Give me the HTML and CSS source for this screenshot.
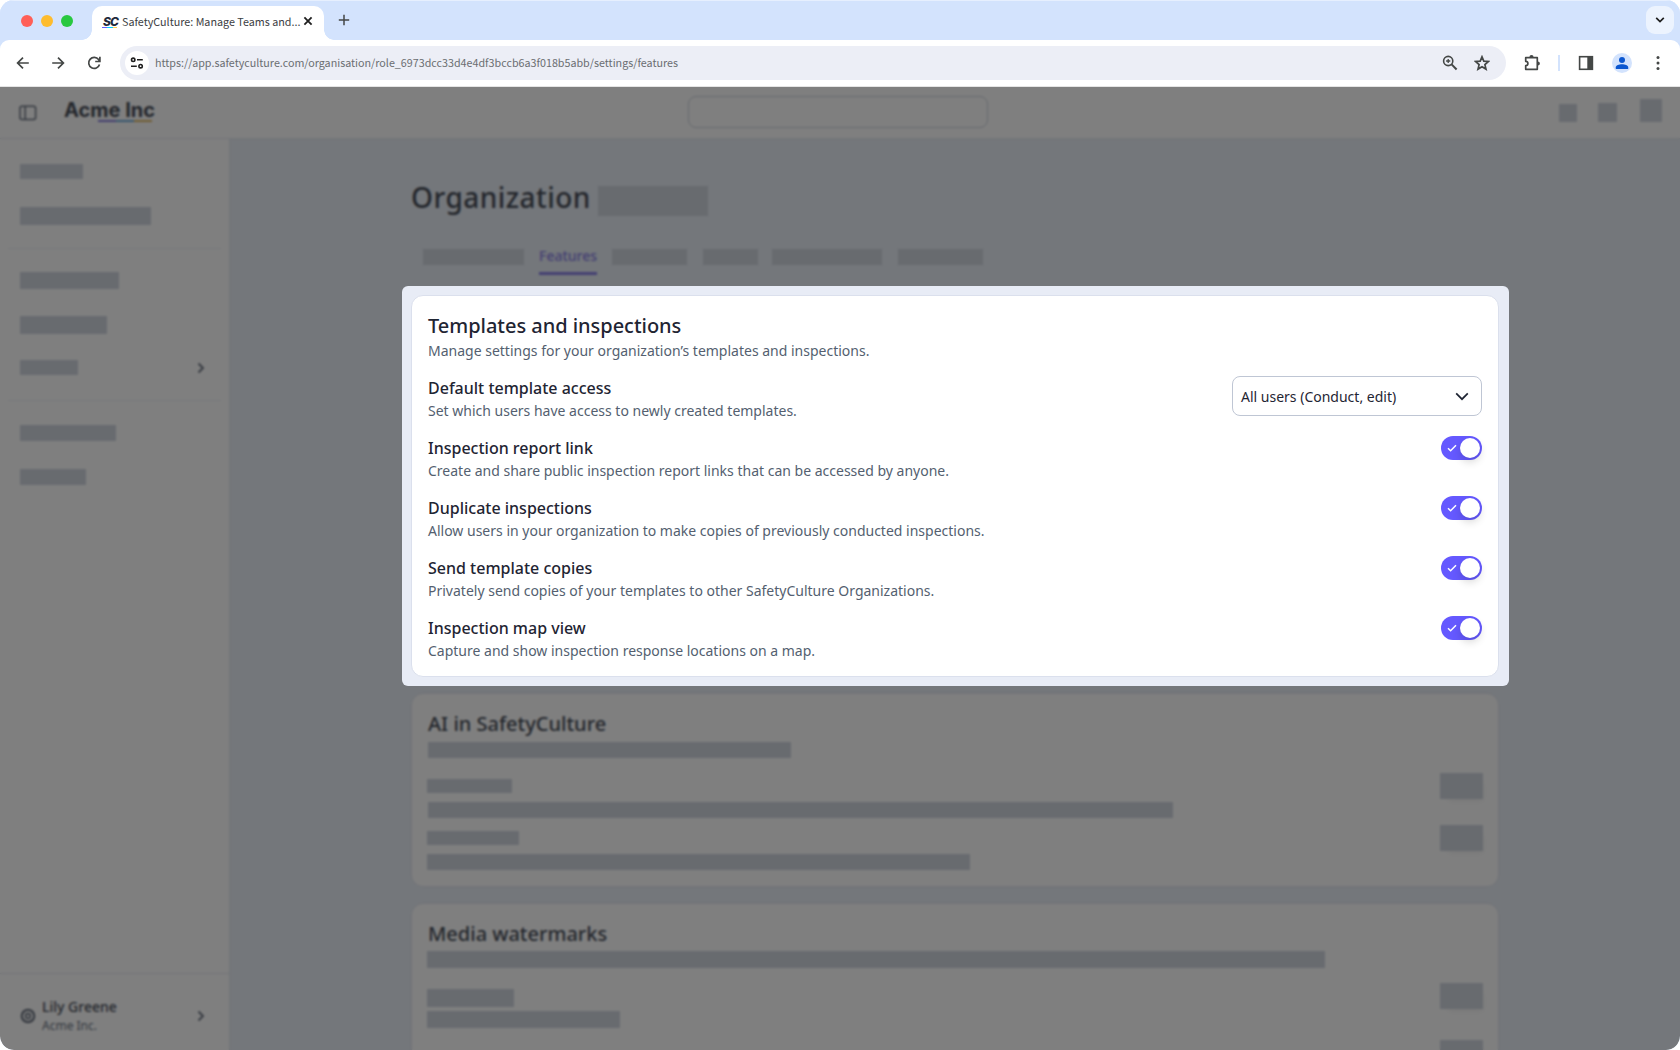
FILE: index.html
```html
<!DOCTYPE html>
<html lang="en">
<head>
  <meta charset="UTF-8">
  <meta name="viewport" content="width=device-width, initial-scale=1.0">
  <title>SafetyCulture: Manage Teams and Users</title>
  <link rel="stylesheet" href="styles.css">
</head>
<body>
  <div class="window">

    <!-- Browser chrome -->
    <div class="tabstrip">
      <div class="lights">
        <span class="light red"></span>
        <span class="light yellow"></span>
        <span class="light green"></span>
      </div>
      <div class="tab">
        <span class="favicon">SC</span>
        <span class="tab-title">SafetyCulture: Manage Teams and...</span>
        <svg class="tab-close" width="10" height="10" viewBox="0 0 10 10"><path d="M1.4 1.4l7.2 7.2M8.6 1.4L1.4 8.6" stroke="#1f1f1f" stroke-width="1.8" fill="none"/></svg>
      </div>
      <svg class="new-tab" width="12" height="12" viewBox="0 0 12 12"><path d="M6 .8v10.4M.8 6h10.4" stroke="#444746" stroke-width="1.5" fill="none"/></svg>
      <div class="tab-search">
        <svg width="10" height="6" viewBox="0 0 10 6"><path d="M1.2 .8L5 4.5 8.8 .8" stroke="#1f1f1f" stroke-width="1.7" fill="none"/></svg>
      </div>
    </div>

    <div class="toolbar">
      <svg class="nav" width="16" height="16" viewBox="0 0 16 16"><path d="M13.8 8H2.8M8 2.6L2.6 8 8 13.4" /></svg>
      <svg class="nav forward" width="16" height="16" viewBox="0 0 16 16"><path d="M2.200 8h11M8 2.6L13.4 8 8 13.400" /></svg>
      <svg class="nav reload" width="16" height="16" viewBox="0 0 16 16"><path d="M13.5 9.4A5.500 5.500 0 1 1 12.600 4.600L13.800 6M13.900 1.800v4.700H9.200" /></svg>
      <div class="omnibox">
        <span class="site-info">
          <svg width="14" height="12" viewBox="0 0 14 12" fill="none" stroke="#1f1f1f" stroke-width="1.6"><circle cx="3.2" cy="2.8" r="1.7"/><path d="M7 2.8h5.8M1 9.2h5.8"/><circle cx="10.6" cy="9.2" r="1.7"/></svg>
        </span>
        <span class="url">https://app.safetyculture.com/organisation/role_6973dcc33d4e4df3bccb6a3f018b5abb/settings/features</span>
        <svg class="zoom-icon" width="16" height="16" viewBox="0 0 16 16" fill="none" stroke="#444746"><circle cx="6.2" cy="6" r="4.6" stroke-width="1.6"/><path d="M9.6 9.4l5 5.1" stroke-width="2"/><path d="M6.2 3.9v4.2M4.1 6h4.2" stroke-width="1.3"/></svg>
        <svg class="star-icon" width="16" height="16" viewBox="0 0 16 16"><path d="M8 1.8l1.8 4.300 4.6.4-3.500 3.100 1.100 4.500L8 11.700l-4 2.400 1.100-4.500L1.600 6.500l4.600-.4z" fill="none" stroke="#444746" stroke-width="1.7"/></svg>
      </div>
      <svg class="puzzle" width="18" height="18" viewBox="0 0 18 18"><path d="M2.7 3.7h11.6v11.6H2.7v-3.6a2.2 2.2 0 0 0 0-4.4z" fill="none" stroke="#444746" stroke-width="1.7" stroke-linejoin="round"/><path d="M6.4 3.2a2.1 2.1 0 0 1 4.2 0zM14.8 7.4a2.1 2.1 0 0 1 0 4.2z" fill="#444746"/></svg>
      <span class="toolbar-divider"></span>
      <svg class="side-panel" width="16" height="16" viewBox="0 0 16 16"><rect x="1.6" y="1.7" width="12.8" height="12.6" fill="none" stroke="#444746" stroke-width="1.6"/><path d="M9.3 1h5.7v14H9.3z" fill="#444746"/></svg>
      <span class="avatar">
        <svg width="14" height="14" viewBox="0 0 14 14" fill="#0b57d0"><circle cx="7" cy="4" r="3"/><path d="M.8 13v-1.8C.8 9.3 4 8.2 7 8.2s6.2 1.1 6.2 3V13z"/></svg>
      </span>
      <svg class="more" width="4" height="14" viewBox="0 0 4 14" fill="#444746"><circle cx="2" cy="1.6" r="1.5"/><circle cx="2" cy="7" r="1.5"/><circle cx="2" cy="12.4" r="1.5"/></svg>
    </div>

    <!-- Web app -->
    <div class="app">
      <div class="app-header">
        <svg class="menu-icon" width="18" height="16" viewBox="0 0 18 16" fill="none" stroke="#6a7280" stroke-width="1.5"><rect x="1" y="1.2" width="15.6" height="13.2" rx="2"/><path d="M6.2 1.2v13.2"/></svg>
        <div class="brand">
          <span class="brand-name">Acme Inc</span>
          <span class="brand-line"></span>
        </div>
        <div class="search"></div>
        <div class="header-actions">
          <span class="block action-one"></span>
          <span class="block action-two"></span>
          <span class="block action-three"></span>
        </div>
      </div>

      <div class="app-body">
        <div class="sidebar">
          <span class="block nav-one"></span>
          <span class="block nav-two"></span>
          <hr class="nav-rule">
          <span class="block nav-three"></span>
          <span class="block nav-four"></span>
          <div class="nav-row">
            <span class="block nav-five"></span>
            <svg width="8" height="12" viewBox="0 0 8 12"><path d="M1.5 1.500L6 6l-4.5 4.5" fill="none" stroke="#6a7280" stroke-width="1.8"/></svg>
          </div>
          <hr class="nav-rule second">
          <span class="block nav-six"></span>
          <span class="block nav-seven"></span>
          <div class="profile">
            <svg width="16" height="16" viewBox="0 0 16 16" fill="none" stroke="#6a7280"><circle cx="8" cy="8" r="6.2" stroke-width="2.2"/><circle cx="8" cy="8" r="2.4" stroke-width="1.6"/></svg>
            <div class="profile-text">
              <span class="profile-name">Lily Greene</span>
              <span class="profile-org">Acme Inc.</span>
            </div>
            <svg width="8" height="12" viewBox="0 0 8 12"><path d="M1.5 1.5L6 6l-4.5 4.5" fill="none" stroke="#6a7280" stroke-width="1.8"/></svg>
          </div>
        </div>

        <div class="main">
          <div class="page-title">
            <h1>Organization</h1>
            <span class="block title-block"></span>
          </div>
          <div class="tabs">
            <span class="block tab-one"></span>
            <span class="tab-active">Features</span>
            <span class="block tab-two"></span>
            <span class="block tab-three"></span>
            <span class="block tab-four"></span>
            <span class="block tab-five"></span>
          </div>

          <div class="card ai-card">
            <h2>AI in SafetyCulture</h2>
            <div class="card-cols">
              <div class="lines">
                <span class="block ai-one"></span>
                <span class="block ai-two"></span>
                <span class="block ai-three"></span>
                <span class="block ai-four"></span>
                <span class="block ai-five"></span>
              </div>
              <div class="switch-blocks ai-switches">
                <span class="block"></span>
                <span class="block"></span>
              </div>
            </div>
          </div>

          <div class="card media-card">
            <h2>Media watermarks</h2>
            <div class="card-cols">
              <div class="lines">
                <span class="block media-one"></span>
                <span class="block media-two"></span>
                <span class="block media-three"></span>
              </div>
              <div class="switch-blocks media-switches">
                <span class="block"></span>
                <span class="block"></span>
              </div>
            </div>
          </div>
        </div>
      </div>

      <div class="overlay"></div>

      <!-- Highlighted settings -->
      <div class="spotlight">
        <div class="settings">
          <h2>Templates and inspections</h2>
          <p>Manage settings for your organization’s templates and inspections.</p>

          <div class="setting">
            <div>
              <h3>Default template access</h3>
              <p>Set which users have access to newly created templates.</p>
            </div>
            <div class="select">
              <span>All users (Conduct, edit)</span>
              <svg width="14" height="9" viewBox="0 0 14 9"><path d="M1.2 1.3L7 7.2l5.8-5.9" fill="none" stroke="#1f2533" stroke-width="1.7"/></svg>
            </div>
          </div>

          <div class="setting">
            <div>
              <h3>Inspection report link</h3>
              <p>Create and share public inspection report links that can be accessed by anyone.</p>
            </div>
            <div class="toggle"><svg width="10" height="8" viewBox="0 0 10 8"><path d="M1 4.2l2.6 2.5L9 1.2"/></svg><span class="knob"></span></div>
          </div>

          <div class="setting">
            <div>
              <h3>Duplicate inspections</h3>
              <p>Allow users in your organization to make copies of previously conducted inspections.</p>
            </div>
            <div class="toggle"><svg width="10" height="8" viewBox="0 0 10 8"><path d="M1 4.2l2.6 2.5L9 1.2"/></svg><span class="knob"></span></div>
          </div>

          <div class="setting">
            <div>
              <h3>Send template copies</h3>
              <p>Privately send copies of your templates to other SafetyCulture Organizations.</p>
            </div>
            <div class="toggle"><svg width="10" height="8" viewBox="0 0 10 8"><path d="M1 4.2l2.6 2.5L9 1.2"/></svg><span class="knob"></span></div>
          </div>

          <div class="setting">
            <div>
              <h3>Inspection map view</h3>
              <p>Capture and show inspection response locations on a map.</p>
            </div>
            <div class="toggle"><svg width="10" height="8" viewBox="0 0 10 8"><path d="M1 4.2l2.6 2.5L9 1.2"/></svg><span class="knob"></span></div>
          </div>
        </div>
      </div>
    </div>
  </div>
</body>
</html>
```

FILE: styles.css
```css
* {
  box-sizing: border-box;
}
body {
  margin: 0;
  background: #fff;
  font-family: "Noto Sans", sans-serif;
  color: #1f2533;
  overflow: hidden;
}
h1, h2, h3, p, hr {
  margin: 0;
}
svg {
  display: block;
  flex: none;
}
.window {
  width: 1680px;
  height: 1050px;
  border-radius: 14px;
  overflow: hidden;
  display: flex;
  flex-direction: column;
  background: #d3e3fd;
}

/* tab strip */
.tabstrip {
  height: 40px;
  flex: none;
  display: flex;
  background: #d3e3fd;
  border-top: 1px solid #e6effe;
}
.lights {
  display: flex;
  gap: 8px;
  width: 92px;
  padding: 14px 0 0 21px;
}
.light {
  width: 12px;
  height: 12px;
  border-radius: 50%;
}
.red { background: #ff5f57; }
.yellow { background: #febc2e; }
.green { background: #28c840; }
.tab {
  position: relative;
  display: flex;
  align-items: center;
  width: 232px;
  height: 34px;
  margin-top: 5px;
  padding: 0 11px 3px 10px;
  border-radius: 10px 10px 0 0;
  background: #fff;
}
.tab::before,
.tab::after {
  content: "";
  position: absolute;
  bottom: 0;
  width: 10px;
  height: 10px;
}
.tab::before {
  left: -10px;
  background: radial-gradient(circle at 0 0, transparent 9.5px, #fff 10px);
}
.tab::after {
  right: -10px;
  background: radial-gradient(circle at 100% 0, transparent 9.5px, #fff 10px);
}
.favicon {
  width: 15px;
  margin-right: 5px;
  padding-left: 1px;
  font: italic 800 12px/11px Inter, sans-serif;
  letter-spacing: -0.8px;
  color: #1f2a3c;
  border-bottom: 1.5px solid;
  border-image: linear-gradient(90deg, #6559ff 35%, #00d1ff 35%, #00d1ff 70%, #ffd14d 70%) 1;
}
.tab-title {
  flex: 1;
  font: 10.75px/18px "Noto Sans CJK SC", sans-serif;
  color: #3c4043;
  white-space: nowrap;
}
.tab-close {
  margin-bottom: 2px;
}
.new-tab {
  margin: 13px 0 0 14px;
}
.tab-search {
  display: flex;
  align-items: center;
  justify-content: center;
  width: 28px;
  height: 28px;
  margin: 5px 6px 0 auto;
  border-radius: 9px;
  background: #ecf3fe;
}

/* toolbar */
.toolbar {
  height: 47px;
  flex: none;
  display: flex;
  align-items: center;
  padding: 0 20px 1px 15px;
  background: #fff;
  border-radius: 9px 9px 0 0;
  border-bottom: 1px solid #e4e4e4;
}
.nav {
  fill: none;
  stroke: #444746;
  stroke-width: 1.7;
}
.forward {
  margin-left: 19px;
}
.reload {
  margin-left: 20px;
}
.omnibox {
  display: flex;
  align-items: center;
  width: 1386px;
  height: 34px;
  margin-left: 18px;
  padding: 0 16px 0 5px;
  border-radius: 17px;
  background: #eceef6;
}
.site-info {
  display: flex;
  align-items: center;
  justify-content: center;
  width: 24px;
  height: 24px;
  border-radius: 50%;
  background: #fff;
}
.url {
  flex: 1;
  margin-left: 6px;
  font: 10.74px/18px "Noto Sans CJK SC", sans-serif;
  color: #6a6d71;
}
.star-icon {
  margin-left: 16px;
}
.puzzle {
  margin-left: 17px;
}
.toolbar-divider {
  width: 2px;
  height: 16px;
  margin-left: 17px;
  background: #d3e3fd;
}
.side-panel {
  margin-left: 18px;
}
.avatar {
  display: flex;
  align-items: center;
  justify-content: center;
  width: 20px;
  height: 20px;
  margin-left: 18px;
  border-radius: 50%;
  background: #d3e3fd;
}
.more {
  margin-left: auto;
}

/* app shell */
.app {
  position: relative;
  flex: 1;
  min-height: 0;
  display: flex;
  flex-direction: column;
  background: #fff;
}
.block {
  display: block;
  flex: none;
  background: #d0d6df;
}
.app-header {
  height: 52px;
  flex: none;
  display: flex;
  align-items: flex-start;
  padding: 0 18px 0 19px;
  border-bottom: 1px solid #e4e8f0;
}
.menu-icon {
  margin-top: 18px;
}
.brand {
  width: 92px;
  margin: 13px 0 0 27px;
}
.brand-name {
  display: block;
  font: 700 20px/20px Inter, sans-serif;
  white-space: nowrap;
  color: #484e59;
}
.brand-line {
  display: block;
  width: 54px;
  height: 2px;
  margin-left: 34px;
  background: linear-gradient(90deg, #857ddd 33%, #6fabdc 33%, #6fabdc 66%, #e0b865 66%);
}
.search {
  width: 300px;
  height: 32px;
  margin: 9px 0 0 532px;
  border: 1px solid #cdd2dd;
  border-radius: 8px;
}
.header-actions {
  display: flex;
  align-items: flex-end;
  height: 35px;
  margin-left: auto;
}
.action-one { width: 18px; height: 18px; }
.action-two { width: 19px; height: 19px; margin-left: 21px; }
.action-three { width: 22px; height: 23px; margin-left: 23px; }
.app-body {
  flex: 1;
  min-height: 0;
  display: flex;
}

/* sidebar */
.sidebar {
  flex: none;
  display: flex;
  flex-direction: column;
  width: 230px;
  padding-top: 25px;
  border-right: 1px solid #e4e8f0;
}
.sidebar > .block {
  margin-left: 20px;
}
.nav-rule {
  flex: none;
  width: 213px;
  height: 1px;
  margin: 23px 0 0 8px;
  border: 0;
  background: #eceff5;
}
.nav-rule.second {
  margin-top: 25px;
}
.nav-one { width: 63px; height: 15px; }
.nav-two { width: 131px; height: 18px; margin-top: 28px; }
.nav-three { width: 99px; height: 17px; margin-top: 23px; }
.nav-four { width: 87px; height: 18px; margin-top: 27px; }
.nav-five { width: 58px; height: 15px; }
.nav-six { width: 96px; height: 16px; margin-top: 24px; }
.nav-seven { width: 66px; height: 16px; margin-top: 28px; }
.nav-row {
  display: flex;
  align-items: center;
  justify-content: space-between;
  margin-top: 26px;
  padding: 0 24px 0 20px;
}
.profile {
  display: flex;
  align-items: center;
  height: 77px;
  margin-top: auto;
  padding: 7px 24px 0 20px;
  border-top: 1px solid #e4e8f0;
}
.profile-text {
  display: flex;
  flex-direction: column;
  flex: 1;
  margin-left: 6px;
}
.profile-name {
  font-size: 14px;
  line-height: 20px;
  font-weight: 500;
  color: #484e59;
}
.profile-org {
  font-size: 12px;
  line-height: 17px;
  color: #6a7482;
}

/* main column */
.main {
  flex: 1;
  display: flex;
  flex-direction: column;
  padding: 40px 181px 0 181px;
  overflow: hidden;
  background: #e8eef6;
}
.page-title {
  flex: none;
  display: flex;
  height: 36px;
}
h1 {
  width: 187px;
  font-size: 28px;
  line-height: 36px;
  font-weight: 500;
  letter-spacing: 0.45px;
  color: #484e59;
}
.title-block { width: 110px; height: 30px; margin-top: 7px; }
.tabs {
  flex: none;
  display: flex;
  align-items: flex-start;
  height: 42px;
  margin-top: 29px;
  padding-left: 12px;
}
.tabs .block {
  height: 16px;
  margin-top: 5px;
}
.tab-active {
  width: 58px;
  height: 31px;
  margin: 0 15px;
  font-size: 14px;
  line-height: 24px;
  font-weight: 500;
  border-bottom: 3px solid #8880e4;
  color: #8880e4;
}
.tab-one { width: 101px; }
.tab-two { width: 75px; }
.tab-three { width: 55px; margin-left: 16px; }
.tab-four { width: 110px; margin-left: 14px; }
.tab-five { width: 85px; margin-left: 16px; }
.card {
  flex: none;
  padding: 16px 15px 0;
  border: 1px solid #e2e6f0;
  border-radius: 12px;
  background: #fff;
}
.card h2,
.settings h2 {
  font-size: 20px;
  line-height: 28px;
  font-weight: 500;
}
.card h2 {
  padding-left: 1px;
  color: #484e59;
}
.ai-card {
  height: 194px;
  margin-top: 407px;
}
.media-card {
  height: 194px;
  margin-top: 16px;
}
.card-cols {
  display: flex;
  justify-content: space-between;
}
.ai-one { width: 363px; height: 16px; margin: 4px 0 0 1px; }
.ai-two { width: 85px; height: 14px; margin-top: 21px; }
.ai-three { width: 745px; height: 16px; margin: 9px 0 0 1px; }
.ai-four { width: 92px; height: 14px; margin-top: 13px; }
.ai-five { width: 543px; height: 16px; margin-top: 9px; }
.media-one { width: 898px; height: 17px; margin-top: 3px; }
.media-two { width: 87px; height: 18px; margin-top: 21px; }
.media-three { width: 193px; height: 17px; margin-top: 4px; }
.switch-blocks {
  display: flex;
  flex-direction: column;
  gap: 26px;
}
.switch-blocks .block {
  width: 43px;
  height: 26px;
  box-shadow: 4px 6px 6px -4px rgba(0, 0, 0, 0.06);
}
.ai-switches {
  padding-top: 35px;
}
.media-switches {
  gap: 31px;
  padding-top: 35px;
}

/* dimmed and blurred page under the highlighted panel */
.overlay {
  position: absolute;
  inset: 0;
  background: rgba(0, 0, 0, 0.5);
  backdrop-filter: blur(1.2px);
}
.spotlight {
  position: absolute;
  left: 402px;
  top: 199px;
  width: 1107px;
  height: 400px;
  padding: 9px 10px 9px 9px;
  border-radius: 6px;
  background: #e8ecf6;
}
.settings {
  height: 382px;
  padding: 16px;
  border: 1px solid #dbe0ed;
  border-radius: 12px;
  background: #fff;
}
.settings h2 {
  letter-spacing: -0.03px;
}
.settings p {
  height: 20px;
  font-size: 14px;
  line-height: 22px;
  color: #545f70;
}
.settings h3 {
  font-size: 16px;
  line-height: 24px;
  font-weight: 500;
}
.setting {
  display: flex;
  align-items: flex-start;
  justify-content: space-between;
  height: 44px;
  margin-top: 16px;
}
.select {
  display: flex;
  align-items: center;
  justify-content: space-between;
  width: 250px;
  height: 40px;
  padding: 0 12px 0 8px;
  border: 1px solid #bfc6d4;
  border-radius: 8px;
  font-size: 14px;
}
.toggle {
  display: flex;
  align-items: center;
  justify-content: space-between;
  width: 41px;
  height: 24px;
  padding: 0 2px 0 6px;
  border-radius: 12px;
  background: #6559ff;
}
.toggle path {
  fill: none;
  stroke: #fff;
  stroke-width: 1.5;
}
.knob {
  width: 20px;
  height: 20px;
  border-radius: 50%;
  background: #fff;
  box-shadow: 0 4px 8px rgba(0, 0, 0, 0.16);
}
```
